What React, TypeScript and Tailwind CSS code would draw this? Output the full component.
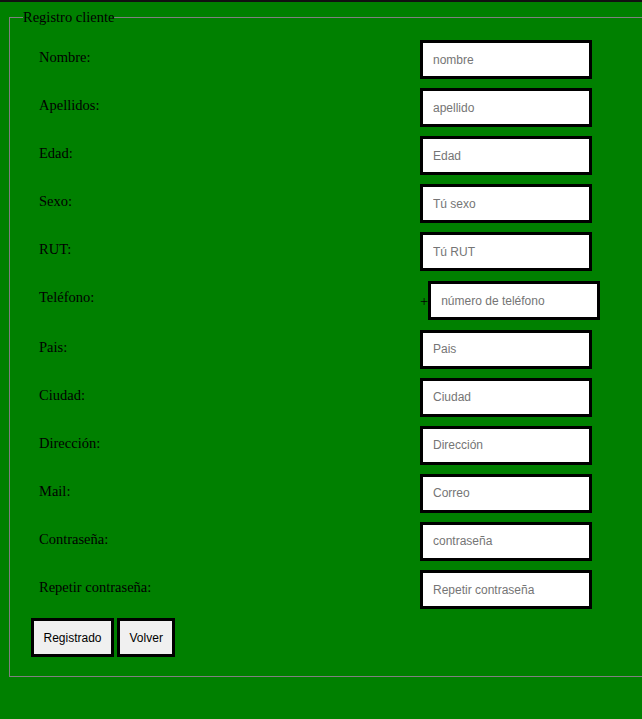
const campos = [
  { label: 'Nombre:', ph: 'nombre' },
  { label: 'Apellidos:', ph: 'apellido' },
  { label: 'Edad:', ph: 'Edad' },
  { label: 'Sexo:', ph: 'Tú sexo' },
  { label: 'RUT:', ph: 'Tú RUT' },
  { label: 'Teléfono:', ph: 'número de teléfono', prefijo: '+' },
  { label: 'Pais:', ph: 'Pais' },
  { label: 'Ciudad:', ph: 'Ciudad' },
  { label: 'Dirección:', ph: 'Dirección' },
  { label: 'Mail:', ph: 'Correo' },
  { label: 'Contraseña:', ph: 'contraseña', tipo: 'password' },
  { label: 'Repetir contraseña:', ph: 'Repetir contraseña', tipo: 'password' },
];

export default function App() {
  return (
    <div className="min-h-screen overflow-hidden bg-[#008000] font-['Liberation_Serif','Times_New_Roman',serif] text-[14.5px] text-black">
      <div className="h-[2px] bg-[#121212]" />
      <fieldset className="ml-[9px] mt-[7px] w-[700px] border border-[#808080] p-0">
        <legend className="ml-[13px] p-0 leading-[16px]">Registro cliente</legend>
        <form className="pl-[21px] pt-[15px] pb-[19px]">
          <div className="flex flex-col gap-[9.1px]">
            {campos.map((c) => (
              <div key={c.label} className="flex items-start">
                <label className="w-[389px] pl-[8px] pt-[9px] leading-[16px]">{c.label}</label>
                <div className={c.prefijo ? 'flex items-center pt-[1px]' : 'flex items-center'}>
                  {c.prefijo && <span className="leading-[16px]">{c.prefijo}</span>}
                  <input
                    type={c.tipo ?? 'text'}
                    placeholder={c.ph}
                    className="h-[39px] w-[172px] border-[3px] border-black bg-white px-[10px] font-['Liberation_Sans',Arial,sans-serif] text-[12px] text-black outline-none placeholder:text-[#757575]"
                  />
                </div>
              </div>
            ))}
          </div>
          <div className="mt-[9px] flex gap-[3px] font-['Liberation_Sans',Arial,sans-serif] text-[12px]">
            <button type="button" className="h-[39px] border-[3px] border-black bg-[#f0f0f0] px-[9.5px] text-black">
              Registrado
            </button>
            <button type="button" className="h-[39px] border-[3px] border-black bg-[#f0f0f0] px-[9.5px] text-black">
              Volver
            </button>
          </div>
        </form>
      </fieldset>
    </div>
  );
}
